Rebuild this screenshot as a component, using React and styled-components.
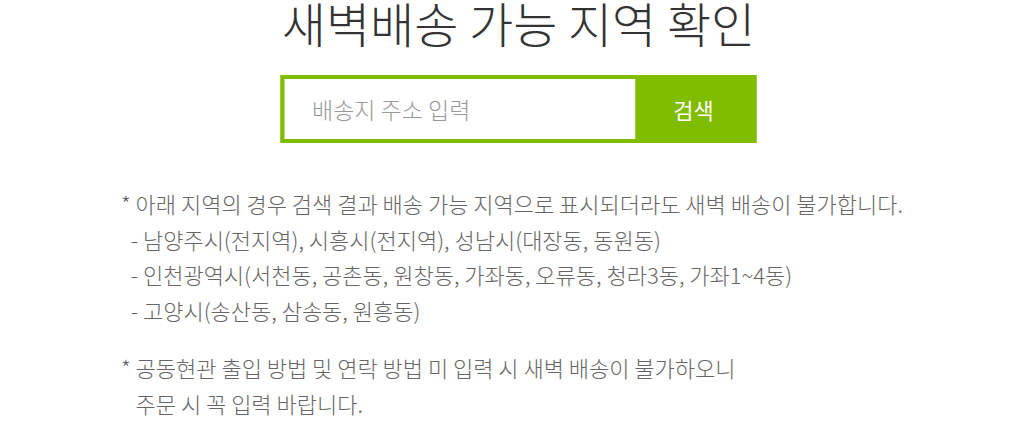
import React from "react";
import styled, { createGlobalStyle } from "styled-components";

const Global = createGlobalStyle`
  html, body { margin: 0; padding: 0; background: #fff; }
  body { font-family: "Noto Sans CJK KR", "Noto Sans", sans-serif; overflow: hidden; }
`;

const Page = styled.div`
  width: 1033px;
  height: 421px;
  overflow: hidden;
  display: flex;
  flex-direction: column;
`;

const Title = styled.h2`
  margin: -6px 0 0;
  text-align: center;
  font-size: 48px;
  line-height: 56px;
  font-weight: 300;
  color: #333;
  letter-spacing: 0;
  padding-left: 4px;
`;

const SearchBox = styled.form`
  margin: 25px auto 0;
  width: 476px;
  height: 75px;
  box-sizing: border-box;
  border: 4px solid #80bc00;
  background: #80bc00;
  display: flex;
  transform: translateX(1.5px);
`;

const Input = styled.input`
  flex: 1;
  border: 0;
  outline: none;
  background: #fff;
  padding: 0 0 0 28px;
  font-family: inherit;
  font-size: 23px;
  font-weight: 300;
  color: #333;
  &::placeholder { color: #999; }
`;

const Button = styled.button`
  width: 117px;
  border: 0;
  background: #80bc00;
  color: #fff;
  font-family: inherit;
  font-size: 22px;
  font-weight: 400;
  padding: 0;
  cursor: pointer;
`;

const Notes = styled.div`
  margin-top: 43px;
  padding-left: 121px;
  display: flex;
  flex-direction: column;
  gap: 22px;
`;

const Para = styled.p`
  margin: 0;
  font-size: 22px;
  line-height: 35.5px;
  font-weight: 300;
  color: #666;
  letter-spacing: 0;
  white-space: pre;
`;

export default function App() {
  return (
    <Page>
      <Global />
      <Title>새벽배송 가능 지역 확인</Title>
      <SearchBox onSubmit={(e) => e.preventDefault()}>
        <Input placeholder="배송지 주소 입력" />
        <Button type="submit">검색</Button>
      </SearchBox>
      <Notes>
        <Para>
          {"* 아래 지역의 경우 검색 결과 배송 가능 지역으로 표시되더라도 새벽 배송이 불가합니다.\n  - 남양주시(전지역), 시흥시(전지역), 성남시(대장동, 동원동)\n  - 인천광역시(서천동, 공촌동, 원창동, 가좌동, 오류동, 청라3동, 가좌1~4동)\n  - 고양시(송산동, 삼송동, 원흥동)"}
        </Para>
        <Para>
          {"* 공동현관 출입 방법 및 연락 방법 미 입력 시 새벽 배송이 불가하오니\n   주문 시 꼭 입력 바랍니다."}
        </Para>
      </Notes>
    </Page>
  );
}
